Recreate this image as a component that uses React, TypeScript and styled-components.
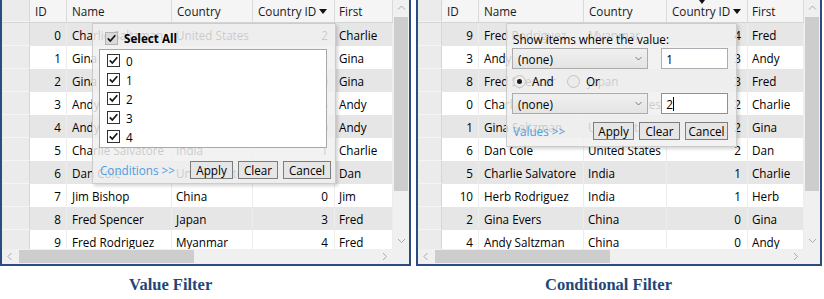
import React from 'react';
import styled, { createGlobalStyle } from 'styled-components';

const GlobalStyle = createGlobalStyle`
  html, body { margin: 0; padding: 0; background: #ffffff; }
  body {
    font-family: "Open Sans", "Noto Sans", sans-serif;
    font-size: 11.7px;
    color: #000;
  }
`;

type Person = [number, string, string, number, string];

const PEOPLE: Person[] = [
  [0, 'Charlie Saltzman', 'United States', 2, 'Charlie'],
  [1, 'Gina Saltzman', 'United States', 2, 'Gina'],
  [2, 'Gina Evers', 'China', 0, 'Gina'],
  [3, 'Andy Bishop', 'Japan', 3, 'Andy'],
  [4, 'Andy Saltzman', 'China', 0, 'Andy'],
  [5, 'Charlie Salvatore', 'India', 1, 'Charlie'],
  [6, 'Dan Cole', 'United States', 2, 'Dan'],
  [7, 'Jim Bishop', 'China', 0, 'Jim'],
  [8, 'Fred Spencer', 'Japan', 3, 'Fred'],
  [9, 'Fred Rodriguez', 'Myanmar', 4, 'Fred'],
  [10, 'Herb Rodriguez', 'India', 1, 'Herb'],
];

const Page = styled.div`
  width: 824px;
  height: 299px;
  overflow: hidden;
`;

const Panels = styled.div`
  display: flex;
  gap: 5px;
`;

const Panel = styled.div<{ $w: number }>`
  position: relative;
  width: ${p => p.$w}px;
  height: 266px;
  box-sizing: border-box;
  border: 2px solid #2b4d7e;
  border-top: none;
  display: grid;
  grid-template-columns: 1fr 16px;
  grid-template-rows: 1fr 15px;
  background: #fff;
`;

const Body = styled.div`
  overflow: hidden;
  display: flex;
  flex-direction: column;
`;

const HeaderRow = styled.div`
  display: flex;
  flex: none;
  height: 23px;
  background: #f5f5f5;
  border-bottom: 1px solid #d5d5d5;
  box-sizing: border-box;
`;

const DataRow = styled.div<{ $alt: boolean }>`
  display: flex;
  flex: none;
  height: 23px;
  background: ${p => (p.$alt ? '#e6e6e6' : '#ffffff')};
`;

const Cell = styled.div<{ $w?: number; $right?: boolean; $pad?: number }>`
  flex: ${p => (p.$w ? `0 0 ${p.$w}px` : '1 1 0')};
  box-sizing: border-box;
  display: flex;
  align-items: center;
  justify-content: ${p => (p.$right ? 'flex-end' : 'flex-start')};
  padding: ${p => (p.$right ? `0 ${p.$pad ?? 5}px 0 0` : `0 0 0 ${p.$pad ?? 5}px`)};
  border-right: 1px solid #ededed;
  white-space: nowrap;
  overflow: hidden;
`;

const HeadCell = styled(Cell)`
  position: relative;
  overflow: visible;
  color: #1a1a1a;
  border-right: 1px solid #dadada;
`;

const RowHead = styled.div<{ $w: number }>`
  flex: 0 0 ${p => p.$w}px;
  box-sizing: border-box;
  background: #ebebeb;
  border-right: 1px solid #d6d6d6;
  border-bottom: 1px solid #f4f4f4;
`;

const SortArrow = styled.span`
  width: 0;
  height: 0;
  margin-left: 3px;
  border-left: 4px solid transparent;
  border-right: 4px solid transparent;
  border-top: 5px solid #111;
`;

const TopMark = styled.span`
  position: absolute;
  top: 0;
  left: 32px;
  width: 0;
  height: 0;
  border-left: 3.5px solid transparent;
  border-right: 3.5px solid transparent;
  border-top: 4px solid #111;
`;

const VScroll = styled.div`
  background: #f0f0f0;
  display: flex;
  flex-direction: column;
`;

const HScroll = styled.div`
  background: #f0f0f0;
  display: flex;
`;

const Corner = styled.div`
  background: #f0f0f0;
`;

const ArrowBox = styled.div`
  flex: 0 0 17px;
  display: flex;
  align-items: center;
  justify-content: center;
`;

const Track = styled.div`
  flex: 1;
`;

const VThumb = styled.div`
  flex: 0 0 174px;
  margin: 0 1px;
  background: #cdcdcd;
`;

const HThumb = styled.div`
  flex: 0 0 175px;
  margin: 1px 0;
  background: #cdcdcd;
`;

const Chevron = ({ dir }: { dir: 'up' | 'down' | 'left' | 'right' }) => {
  const pts = {
    up: '1,5.5 4.5,2 8,5.5',
    down: '1,3 4.5,6.5 8,3',
    left: '5.5,1 2,4.5 5.5,8',
    right: '3,1 6.5,4.5 3,8',
  }[dir];
  return (
    <svg width="9" height="9" viewBox="0 0 9 9">
      <polyline points={pts} fill="none" stroke="#a9a9a9" strokeWidth="1" />
    </svg>
  );
};

/* popup parts */

const Popup = styled.div<{ $left: number; $w: number; $h: number }>`
  position: absolute;
  top: 23px;
  left: ${p => p.$left}px;
  width: ${p => p.$w}px;
  height: ${p => p.$h}px;
  box-sizing: border-box;
  background: rgba(240, 240, 240, 0.84);
  border: 1px solid #cccccc;
  box-shadow: 2px 2px 3px rgba(0, 0, 0, 0.16);
  z-index: 2;
  display: flex;
  flex-direction: column;
`;

const CheckBox = styled.span<{ $muted?: boolean }>`
  width: 13px;
  height: 13px;
  box-sizing: border-box;
  flex: none;
  border: 1px solid ${p => (p.$muted ? '#b3b3b3' : '#333333')};
  background: ${p => (p.$muted ? '#dadada' : '#ffffff')};
  display: inline-flex;
  align-items: center;
  justify-content: center;
`;

const Checked = ({ muted }: { muted?: boolean }) => (
  <CheckBox $muted={muted}>
    <svg width="11" height="11" viewBox="0 0 11 11">
      <path d="M1.8 5.4 L4.3 8 L9.3 2.2" fill="none" stroke="#151515" strokeWidth="1.7" />
    </svg>
  </CheckBox>
);

const SelectAllRow = styled.label`
  display: flex;
  align-items: center;
  gap: 6px;
  height: 14px;
  margin-top: 7px;
  padding-left: 6px;
  font-weight: 700;
`;

const ListBox = styled.div`
  width: 228px;
  height: 99px;
  margin-top: 4px;
  box-sizing: border-box;
  background: #fff;
  border: 1px solid #a9a9a9;
  padding: 1px 0 0 7px;
`;

const ListItem = styled.label`
  display: flex;
  align-items: center;
  gap: 6px;
  height: 19px;
`;

const Footer = styled.div<{ $mt: number }>`
  display: flex;
  align-items: center;
  height: 18px;
  margin-top: ${p => p.$mt}px;
`;

const LinkText = styled.span`
  color: #4e9de0;
  padding-left: 1px;
`;

const Buttons = styled.div`
  margin-left: auto;
  display: flex;
  gap: 5px;
`;

const Button = styled.button<{ $w: number }>`
  width: ${p => p.$w}px;
  height: 18px;
  box-sizing: border-box;
  padding: 0;
  font: inherit;
  color: #000;
  background: #e6e6e6;
  border: 1px solid #7d7d7d;
  line-height: 14px;
`;

const Title = styled.div`
  margin-top: 7px;
  height: 16px;
  line-height: 16px;
  padding-left: 1px;
`;

const FieldRow = styled.div<{ $mt?: number }>`
  display: flex;
  align-items: center;
  gap: 13px;
  margin-top: ${p => p.$mt ?? 0}px;
`;

const Select = styled.div`
  width: 137px;
  height: 21px;
  box-sizing: border-box;
  border: 1px solid #acacac;
  background: linear-gradient(#f0f0f0, #e4e4e4);
  display: flex;
  align-items: center;
  justify-content: space-between;
  padding: 0 5px 0 5px;
`;

const TextBox = styled.div<{ $focus?: boolean }>`
  width: 67px;
  height: 21px;
  box-sizing: border-box;
  border: 1px solid ${p => (p.$focus ? '#569de5' : '#abadb3')};
  background: #fff;
  display: flex;
  align-items: center;
  padding-left: 4px;
`;

const Caret = styled.span`
  display: inline-block;
  width: 1px;
  height: 14px;
  background: #000;
`;

const RadioRow = styled.div`
  display: flex;
  align-items: center;
  height: 24px;
  padding-left: 1px;
`;

const RadioOption = styled.label<{ $w?: number }>`
  display: flex;
  align-items: center;
  gap: 6px;
  width: ${p => (p.$w ? `${p.$w}px` : 'auto')};
`;

const RadioCircle = styled.span<{ $on?: boolean }>`
  width: 13px;
  height: 13px;
  box-sizing: border-box;
  border-radius: 50%;
  border: 1px solid #c3c3c3;
  background: #ececec;
  display: inline-flex;
  align-items: center;
  justify-content: center;
  &::after {
    content: '';
    width: 5px;
    height: 5px;
    border-radius: 50%;
    background: ${p => (p.$on ? '#1d1d1d' : 'transparent')};
  }
`;

const Captions = styled.div`
  display: flex;
  gap: 5px;
  margin-top: 10px;
`;

const Caption = styled.div<{ $w: number }>`
  width: ${p => p.$w}px;
  box-sizing: border-box;
  padding-left: 129px;
  font-family: "Liberation Serif", serif;
  font-weight: 700;
  font-size: 16.5px;
  line-height: 18px;
  color: #224777;
`;

type GridProps = {
  width: number;
  cols: number[];
  order: number[];
  topMark?: boolean;
  children?: React.ReactNode;
};

const DataGrid = ({ width, cols, order, topMark, children }: GridProps) => (
  <Panel $w={width}>
    <Body>
      <HeaderRow>
        <RowHead $w={cols[0]} />
        <HeadCell $w={cols[1]}>ID</HeadCell>
        <HeadCell $w={cols[2]}>Name</HeadCell>
        <HeadCell $w={cols[3]}>Country</HeadCell>
        <HeadCell $w={cols[4]}>
          {topMark && <TopMark />}
          Country ID<SortArrow />
        </HeadCell>
        <HeadCell $pad={4}>First</HeadCell>
      </HeaderRow>
      {order.map((id, i) => {
        const [pid, name, country, cid, first] = PEOPLE[id];
        return (
          <DataRow key={pid} $alt={i % 2 === 0}>
            <RowHead $w={cols[0]} />
            <Cell $w={cols[1]} $right>{pid}</Cell>
            <Cell $w={cols[2]}>{name}</Cell>
            <Cell $w={cols[3]} $pad={4}>{country}</Cell>
            <Cell $w={cols[4]} $right $pad={6}>{cid}</Cell>
            <Cell $pad={4}>{first}</Cell>
          </DataRow>
        );
      })}
    </Body>
    <VScroll>
      <ArrowBox><Chevron dir="up" /></ArrowBox>
      <VThumb />
      <Track />
      <ArrowBox><Chevron dir="down" /></ArrowBox>
    </VScroll>
    <HScroll>
      <ArrowBox><Chevron dir="left" /></ArrowBox>
      <HThumb />
      <Track />
      <ArrowBox><Chevron dir="right" /></ArrowBox>
    </HScroll>
    <Corner />
    {children}
  </Panel>
);

const ValueFilter = () => (
  <Popup $left={90} $w={244} $h={161} style={{ padding: '0 4px 0 6px' }}>
    <SelectAllRow>
      <Checked muted />
      Select All
    </SelectAllRow>
    <ListBox>
      {[0, 1, 2, 3, 4].map(v => (
        <ListItem key={v}>
          <Checked />
          {v}
        </ListItem>
      ))}
    </ListBox>
    <Footer $mt={13}>
      <LinkText>Conditions &gt;&gt;</LinkText>
      <Buttons>
        <Button $w={43}>Apply</Button>
        <Button $w={40}>Clear</Button>
        <Button $w={48}>Cancel</Button>
      </Buttons>
    </Footer>
  </Popup>
);

const SelectChevron = () => (
  <svg width="7" height="5" viewBox="0 0 7 5">
    <polyline points="0.5,1 3.5,4 6.5,1" fill="none" stroke="#7a7a7a" strokeWidth="1" />
  </svg>
);

const ConditionalFilter = () => (
  <Popup $left={88} $w={231} $h={124} style={{ padding: '0 8px 0 5px' }}>
    <Title>Show items where the value:</Title>
    <FieldRow $mt={1}>
      <Select>(none)<SelectChevron /></Select>
      <TextBox>1</TextBox>
    </FieldRow>
    <RadioRow>
      <RadioOption $w={54}><RadioCircle $on />And</RadioOption>
      <RadioOption><RadioCircle />Or</RadioOption>
    </RadioRow>
    <FieldRow>
      <Select>(none)<SelectChevron /></Select>
      <TextBox $focus>2<Caret /></TextBox>
    </FieldRow>
    <Footer $mt={8}>
      <LinkText>Values &gt;&gt;</LinkText>
      <Buttons>
        <Button $w={41}>Apply</Button>
        <Button $w={41}>Clear</Button>
        <Button $w={43}>Cancel</Button>
      </Buttons>
    </Footer>
  </Popup>
);

export default function App() {
  return (
    <Page>
      <GlobalStyle />
      <Panels>
        <DataGrid width={411} cols={[28, 37, 105, 81, 82]} order={[0, 1, 2, 3, 4, 5, 6, 7, 8, 9]}>
          <ValueFilter />
        </DataGrid>
        <DataGrid width={406} cols={[24, 37, 105, 83, 81]} order={[9, 3, 8, 0, 1, 6, 5, 10, 2, 4]} topMark>
          <ConditionalFilter />
        </DataGrid>
      </Panels>
      <Captions>
        <Caption $w={411}>Value Filter</Caption>
        <Caption $w={406}>Conditional Filter</Caption>
      </Captions>
    </Page>
  );
}
